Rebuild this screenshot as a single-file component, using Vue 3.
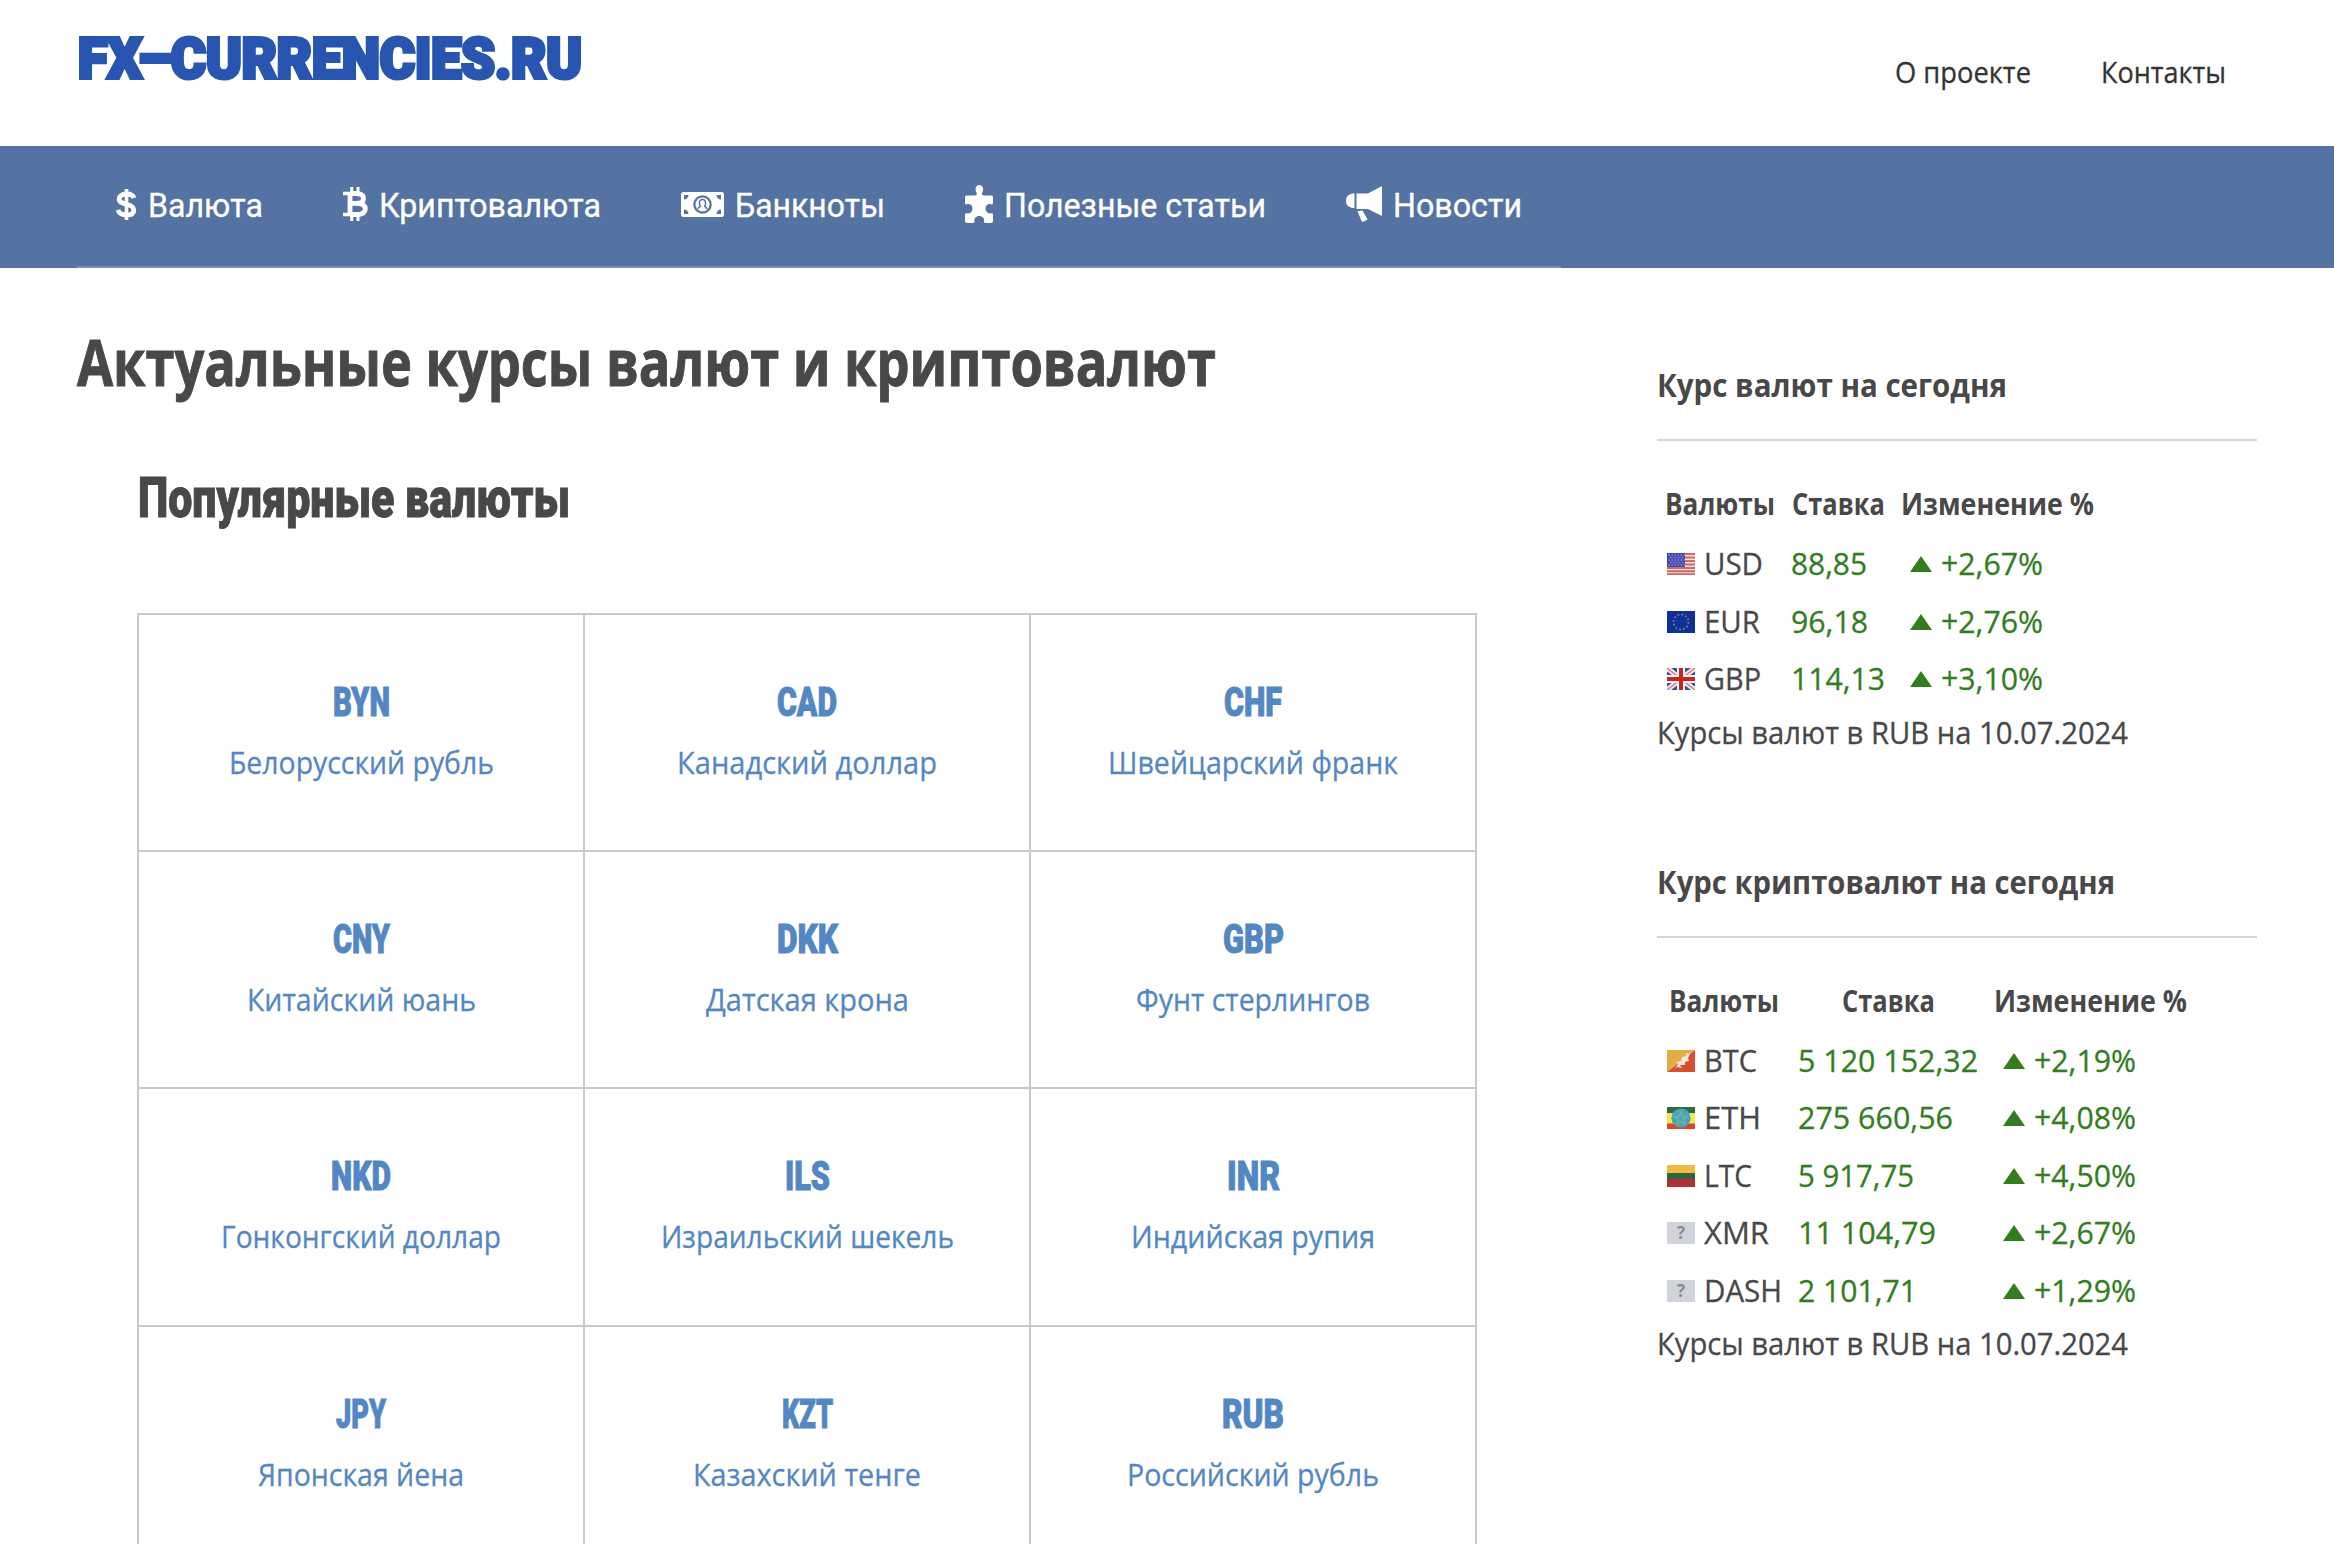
<script setup>
const menu = [
  {name: 'Валюта', icon: 'dollar', width: 115},
  {name: 'Криптовалюта', icon: 'bitcoin', width: 222},
  {name: 'Банкноты', icon: 'banknote', width: 150},
  {name: 'Полезные статьи', icon: 'puzzle', width: 262},
  {name: 'Новости', icon: 'horn', width: 129}
]

const currencies = [
  {code: 'BYN', name: 'Белорусский рубль', codeWidth: 57, width: 265},
  {code: 'CAD', name: 'Канадский доллар', codeWidth: 60, width: 260},
  {code: 'CHF', name: 'Швейцарский франк', codeWidth: 58, width: 290},
  {code: 'CNY', name: 'Китайский юань', codeWidth: 57, width: 229},
  {code: 'DKK', name: 'Датская крона', codeWidth: 61, width: 203},
  {code: 'GBP', name: 'Фунт стерлингов', codeWidth: 61, width: 234},
  {code: 'NKD', name: 'Гонконгский доллар', codeWidth: 60, width: 280},
  {code: 'ILS', name: 'Израильский шекель', codeWidth: 45, width: 293},
  {code: 'INR', name: 'Индийская рупия', codeWidth: 53, width: 244},
  {code: 'JPY', name: 'Японская йена', codeWidth: 50, width: 206},
  {code: 'KZT', name: 'Казахский тенге', codeWidth: 51, width: 228},
  {code: 'RUB', name: 'Российский рубль', codeWidth: 62, width: 252}
]

const widgets = [
  {
    title: 'Курс валют на сегодня',
    width: 350,
    rows: [
      {flag: 'us', code: 'USD', codeWidth: 59, rate: '88,85', rateWidth: 76, change: '+2,67%'},
      {flag: 'eu', code: 'EUR', codeWidth: 56, rate: '96,18', rateWidth: 77, change: '+2,76%'},
      {flag: 'gb', code: 'GBP', codeWidth: 57, rate: '114,13', rateWidth: 94, change: '+3,10%'}
    ]
  },
  {
    title: 'Курс криптовалют на сегодня',
    width: 458,
    rows: [
      {flag: 'bt', code: 'BTC', codeWidth: 53, rate: '5 120 152,32', rateWidth: 180, change: '+2,19%'},
      {flag: 'et', code: 'ETH', codeWidth: 57, rate: '275 660,56', rateWidth: 155, change: '+4,08%'},
      {flag: 'lt', code: 'LTC', codeWidth: 48, rate: '5 917,75', rateWidth: 116, change: '+4,50%'},
      {flag: 'none', code: 'XMR', codeWidth: 65, rate: '11 104,79', rateWidth: 138, change: '+2,67%'},
      {flag: 'none', code: 'DASH', codeWidth: 78, rate: '2 101,71', rateWidth: 119, change: '+1,29%'}
    ]
  }
]

// squeezes a text to the given width and keeps its box in the flow
const vFit = {
  mounted(el, {value}) {
    const w = el.getBoundingClientRect().width
    el.style.transform = `scaleX(${value / w})`
    el.style.marginRight = `${value - w}px`
  }
}
</script>

<template>
  <header class="header">
    <a class="logo" href="#"><span v-fit="504" class="fit">FX–CURRENCIES.RU</span></a>
    <nav class="top-links">
      <a href="#"><span v-fit="136" class="fit">О проекте</span></a>
      <a href="#"><span v-fit="125" class="fit">Контакты</span></a>
    </nav>
  </header>

  <div class="menu-bar">
    <nav class="menu">
      <a v-for="item in menu" :key="item.name" href="#" class="menu-item" :class="item.icon">
        <svg v-if="item.icon === 'dollar'" class="icon" width="21" height="31" viewBox="0 0 21 31">
          <path d="M10.500 0V31" stroke="#fff" stroke-width="3.600"/>
          <path d="M18 9C17 6 14 5 10.500 5C6 5 3.200 7 3.200 10C3.200 13.500 7 14.300 10.500 15.200C14.500 16.200 17.800 17.300 17.800 21C17.800 24.300 15 26 10.500 26C6 26 3 24.500 2 21" fill="none" stroke="#fff" stroke-width="4.800"/>
        </svg>
        <svg v-else-if="item.icon === 'bitcoin'" class="icon" width="25" height="34" viewBox="0 0 25 34">
          <path d="M8.700 0V7M15 0V7M8.700 27V34M15 27V34" stroke="#fff" stroke-width="3"/>
          <path d="M0 6.500H13M0 27.500H13" stroke="#fff" stroke-width="3.600"/>
          <path d="M7 6.500V27.500M7 6.500H13C18 6.500 20.500 8 20.500 11.500C20.500 15 18 16.400 13 16.400H7M13 16.400C19 16.400 22.300 18 22.300 22C22.300 26 19 27.500 13 27.500H7" fill="none" stroke="#fff" stroke-width="4.800"/>
        </svg>
        <svg v-else-if="item.icon === 'banknote'" class="icon" width="43" height="25" viewBox="0 0 43 25">
          <rect width="43" height="25" rx="2.500" fill="#fff"/>
          <path d="M3 7.500V3H7.500A4.500 4.500 0 0 1 3 7.500ZM40 7.500V3H35.500A4.500 4.500 0 0 0 40 7.500ZM3 17.500V22H7.500A4.500 4.500 0 0 0 3 17.500ZM40 17.500V22H35.500A4.500 4.500 0 0 1 40 17.500Z" fill="#5473a3"/>
          <circle cx="21.500" cy="12.500" r="9.300" fill="#5473a3"/>
          <circle cx="21.500" cy="12.500" r="7" fill="#fff"/>
          <path d="M17 17.300C17 15.500 18 15 19.300 14.300C17.500 10.500 18.500 7.500 21.500 7.500C24.500 7.500 25.500 10.500 23.700 14.300C25 15 26 15.500 26 17.300" fill="none" stroke="#5473a3" stroke-width="1.500"/>
        </svg>
        <svg v-else-if="item.icon === 'puzzle'" class="icon" width="28" height="38" viewBox="0 0 28 38">
          <path d="M2 10.500H9.500C11.500 10.500 12.300 9.500 11.600 7.800C10.600 6 10.300 4.500 10.700 3C11.300 1 12.600 0 14.300 0C16 0 17.400 1 18 3C18.400 4.500 18 6 17.200 7.800C16.500 9.500 17.300 10.500 19 10.500H26C27.300 10.500 28 11.200 28 12.500V18C28 19 27 19.600 26 19.300C23 18.300 20.500 20.500 20.500 23.500C20.500 26.800 23 29 26 28.300C27.200 28 28 28.600 28 29.600V36C28 37.300 27.300 38 26 38H21C19.500 38 18.700 37.200 19 36C19.700 33.500 17.500 31 14.200 31C11 31 8.800 33.500 9.500 36C9.800 37.200 9 38 7.500 38H2C.700 38 0 37.300 0 36V29.600C0 28.600 .800 28 2 28.300C5 29 7.500 26.800 7.500 23.500C7.500 20.500 5 18.300 2 19.300C1 19.600 0 19 0 18V12.500C0 11.200 .700 10.500 2 10.500Z" fill="#fff"/>
        </svg>
        <svg v-else class="icon" width="36" height="36" viewBox="0 0 36 36">
          <path d="M8.500 7.500V22C3.500 22 0 19.500 0 14.700C0 10 3.500 7.500 8.500 7.500ZM10.500 7.500H22L36 0V30L22 23H10.500ZM11.500 25.300L16.500 24.500L21.500 33.500L17.500 35.700C16.500 36 16 35.700 15.600 35Z" fill="#fff"/>
        </svg>
        <span v-fit="item.width" class="fit">{{ item.name }}</span>
      </a>
    </nav>
  </div>

  <div class="page">
    <main class="content">
      <h1><span v-fit="1139" class="fit">Актуальные курсы валют и криптовалют</span></h1>
      <section class="popular">
        <h2><span v-fit="432" class="fit">Популярные валюты</span></h2>
        <div class="grid">
          <a v-for="item in currencies" :key="item.code" href="#" class="cell">
            <div class="code"><span v-fit="item.codeWidth" class="fit">{{ item.code }}</span></div>
            <div class="name"><span v-fit="item.width" class="fit">{{ item.name }}</span></div>
          </a>
        </div>
      </section>
    </main>

    <aside class="sidebar">
      <section v-for="widget in widgets" :key="widget.title" class="widget">
        <h3><span v-fit="widget.width" class="fit">{{ widget.title }}</span></h3>
        <table>
          <thead>
            <tr>
              <th><span v-fit="110" class="fit">Валюты</span></th>
              <th><span v-fit="93" class="fit">Ставка</span></th>
              <th><span v-fit="193" class="fit">Изменение %</span></th>
            </tr>
          </thead>
          <tbody>
            <tr v-for="row in widget.rows" :key="row.code">
              <td>
                <svg class="flag" width="28" height="22" viewBox="0 0 28 22">
                  <g v-if="row.flag === 'us'">
                    <rect width="28" height="22" fill="#f7dfda"/>
                    <path d="M0 1H28M0 4.500H28M0 8H28M0 11.500H28M0 15H28M0 18.200H28M0 21.300H28" stroke="#cc6a66" stroke-width="1.900"/>
                    <rect width="18" height="14" fill="#4145b0"/>
                    <path d="M1.500 2H18M3 4.500H18M1.500 7H18M3 9.500H18M1.500 12H18" stroke="#8b8fd8" stroke-width="1.300" stroke-dasharray="1.500 1.500"/>
                  </g>
                  <g v-else-if="row.flag === 'eu'">
                    <rect width="28" height="22" fill="#112f9b"/>
                    <circle cx="14" cy="11" r="7.500" fill="none" stroke="#6f8262" stroke-width="1.800" stroke-dasharray="1.900 2.030"/>
                  </g>
                  <g v-else-if="row.flag === 'gb'">
                    <rect width="28" height="22" fill="#3452a5"/>
                    <path d="M0 0L28 22M28 0L0 22" stroke="#f5eef2" stroke-width="5"/>
                    <path d="M0 0L28 22M28 0L0 22" stroke="#dc8085" stroke-width="1.500"/>
                    <path d="M14 0V22M0 11H28" stroke="#fbf3f3" stroke-width="8"/>
                    <path d="M14 0V22M0 11H28" stroke="#c6281f" stroke-width="4"/>
                  </g>
                  <g v-else-if="row.flag === 'bt'">
                    <path d="M0 0H28L0 22Z" fill="#e3ad43"/>
                    <path d="M28 0V22H0Z" fill="#d74d31"/>
                    <path d="M8 19L11 14L9 12L14 11L15 7L19 6L19 3L23 4L21 8L22 11L18 12L18 15L13 15L15 18L10 17Z" fill="#f4e5d8"/>
                  </g>
                  <g v-else-if="row.flag === 'et'">
                    <rect width="28" height="22" fill="#f5e650"/>
                    <rect width="28" height="6" fill="#2c6b42"/>
                    <rect y="16.500" width="28" height="5.500" fill="#d8472c"/>
                    <circle cx="14" cy="11" r="9.600" fill="#45a3c4"/>
                    <path d="M14 5L15.800 9.500L20 9.800L16.700 12.500L18 17L14 14.500L10 17L11.300 12.500L8 9.800L12.200 9.500Z" fill="none" stroke="#78b58b" stroke-width="1.400"/>
                  </g>
                  <g v-else-if="row.flag === 'lt'">
                    <rect width="28" height="8" fill="#f3ba42"/>
                    <rect y="8" width="28" height="6" fill="#2c6544"/>
                    <rect y="14" width="28" height="8" fill="#b13232"/>
                  </g>
                  <g v-else>
                    <rect width="28" height="22" fill="#d1d5db"/>
                    <text x="14" y="17" text-anchor="middle" class="unknown">?</text>
                  </g>
                </svg>
                <span v-fit="row.codeWidth" class="fit">{{ row.code }}</span>
              </td>
              <td class="green"><span v-fit="row.rateWidth" class="fit">{{ row.rate }}</span></td>
              <td class="green">
                <i class="up"></i>
                <span v-fit="102" class="fit">{{ row.change }}</span>
              </td>
            </tr>
          </tbody>
        </table>
        <p><span v-fit="471" class="fit">Курсы валют в RUB на 10.07.2024</span></p>
      </section>
    </aside>
  </div>
</template>

<style>
html,
body {
  margin: 0;
  height: 1544px;
  overflow: hidden;
  background: #fff;
}

#app {
  height: 1544px;
  overflow: hidden;
}
</style>

<style scoped>
a {
  color: inherit;
  text-decoration: none;
}

.fit {
  display: inline-block;
  white-space: nowrap;
  transform-origin: 0 50%;
}

.header,
.page {
  font-family: "Open Sans", "Noto Sans", sans-serif;
  color: #484848;
}

.header {
  display: flex;
  justify-content: space-between;
  height: 146px;
  padding: 0 108px 0 78px;
  box-sizing: border-box;
}

.logo {
  padding-top: 24px;
  font: 900 56px/70px Roboto, sans-serif;
  color: #2855b0;
  -webkit-text-stroke: 4px #2855b0;
}

.top-links {
  display: flex;
  gap: 70px;
  padding-top: 52px;
  font-size: 30px;
  line-height: 40px;
  color: #333;
  -webkit-text-stroke: .300px;
}

.menu-bar {
  height: 122px;
  padding-left: 77px;
  box-sizing: border-box;
  background: #5473a3;
}

.menu {
  display: flex;
  width: 1484px;
  height: 122px;
  box-sizing: border-box;
  border-bottom: 2px solid #7690b8;
}

.menu-item {
  display: flex;
  align-items: flex-start;
  padding: 40px 40px 0 40px;
  font: 33px/40px Roboto, sans-serif;
  color: #fff;
  -webkit-text-stroke: .300px;
}

.menu-item .fit {
  margin-left: 11px;
}

.menu-item.dollar {
  padding-left: 39px;
}

.icon {
  flex: none;
  margin-top: 1px;
}

.dollar .icon {
  margin-top: 3px;
}

.banknote .icon {
  margin-top: 6px;
}

.puzzle .icon {
  margin-top: -1px;
}

.horn .icon {
  margin-top: 0;
}

.page {
  display: flex;
}

.content {
  width: 1400px;
  margin-left: 77px;
  padding-top: 54px;
}

h1 {
  margin: 0;
  font-size: 64px;
  line-height: 80px;
  font-weight: 700;
  -webkit-text-stroke: 1px;
}

.popular {
  margin: 61px 0 0 61px;
}

h2 {
  margin: 0;
  font: 900 55px/70px Roboto, sans-serif;
  -webkit-text-stroke: 1px;
}

.grid {
  display: grid;
  grid-template-columns: repeat(3, 446px);
  grid-auto-rows: 237.200px;
  width: 1338px;
  margin: 80px 0 0 -1px;
  border-top: 2px solid #c9c9c9;
  border-left: 2px solid #c9c9c9;
}

.cell {
  padding-top: 63px;
  text-align: center;
  color: #5387c3;
  border-right: 2px solid #c9c9c9;
  border-bottom: 2px solid #c9c9c9;
}

.code {
  font: 900 40px/50px Roboto, sans-serif;
  -webkit-text-stroke: 1px;
}

.name {
  margin-top: 14px;
  font-size: 31px;
  line-height: 40px;
  -webkit-text-stroke: .300px;
}

.sidebar {
  width: 600px;
  margin-left: 180px;
  padding-top: 95px;
}

.widget {
  margin-bottom: 106px;
}

h3 {
  margin: 0 0 34px;
  padding-bottom: 32px;
  font-size: 33px;
  line-height: 44px;
  font-weight: 700;
  border-bottom: 2px solid #d6d6d6;
}

table {
  border-collapse: collapse;
  font-size: 31px;
}

th,
td {
  height: 57.500px;
  padding: 0 8px;
  line-height: 57px;
  text-align: left;
  white-space: nowrap;
}

td,
p {
  -webkit-text-stroke: .300px;
}

th {
  height: 60px;
  padding-bottom: 3px;
  box-sizing: border-box;
  font-size: 30px;
  text-align: center;
}

.flag {
  margin: 0 9px 0 2px;
  vertical-align: 0;
}

.unknown {
  font: 700 17px "Open Sans", sans-serif;
  fill: #858b94;
}

.green {
  color: #327e1e;
}

.up {
  display: inline-block;
  margin: 0 9px 3px 9px;
  border: 11px solid transparent;
  border-top: 0;
  border-bottom: 16px solid #327e1e;
}

p {
  margin: 2px 0 0;
  font-size: 31px;
  line-height: 44px;
}
</style>
